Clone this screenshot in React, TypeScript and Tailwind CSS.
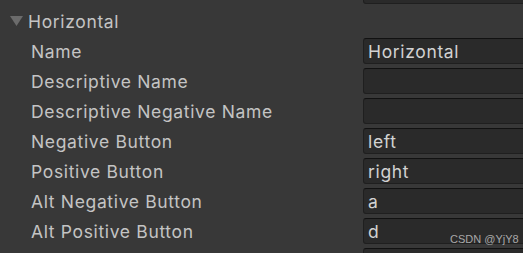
import React from 'react';

const rows = [
  { label: 'Name', value: 'Horizontal' },
  { label: 'Descriptive Name', value: '' },
  { label: 'Descriptive Negative Name', value: '' },
  { label: 'Negative Button', value: 'left' },
  { label: 'Positive Button', value: 'right' },
  { label: 'Alt Negative Button', value: 'a' },
  { label: 'Alt Positive Button', value: 'd' },
  { label: '', value: '' },
];

function Field({ value }: { value: string }) {
  return (
    <div className="h-[26px] flex-1 rounded-[3px] border border-[#1f1f1f] border-t-[#111111] bg-[#2a2a2a] pl-[4px] pt-[1px] text-[17.5px] leading-[24px] tracking-[0.65px] text-[#d2d2d2]">
      {value}
    </div>
  );
}

export default function App() {
  return (
    <div
      className="relative h-[253px] w-[523px] overflow-hidden bg-[#383838]"
      style={{ fontFamily: 'Inter, "Noto Sans", sans-serif' }}
    >
      <div className="-mt-[24px] flex flex-col">
        <div className="flex h-[30px] items-center pl-[363px]">
          <div className="-mr-[10px] flex flex-1">
            <Field value="" />
          </div>
        </div>
        <div className="flex h-[30px] items-center pl-[10px]">
          <svg width="13" height="10" viewBox="0 0 13 10" className="mr-[5px] mt-[-1px]">
            <path d="M0 0 L13 0 L6.5 10 Z" fill="#6b6b6b" />
          </svg>
          <span className="pt-[2px] text-[17.5px] tracking-[0.65px] text-[#c4c4c4]">Horizontal</span>
        </div>
        {rows.map((row, i) => (
          <div key={i} className="flex h-[30px] items-center">
            <span className="w-[363px] shrink-0 pl-[31px] pt-[2px] text-[17.5px] tracking-[0.65px] text-[#c4c4c4]">
              {row.label}
            </span>
            <div className="-mr-[10px] flex flex-1">
              <Field value={row.value} />
            </div>
          </div>
        ))}
      </div>
      <span
        className="absolute left-[450px] top-[231px] text-[11px] text-[#a8a8a8]"
        style={{ fontFamily: '"Liberation Sans", Arial, sans-serif' }}
      >
        CSDN @YjY8
      </span>
    </div>
  );
}
